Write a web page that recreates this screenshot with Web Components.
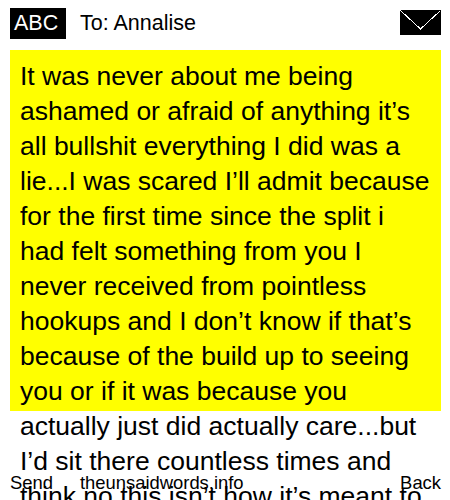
<!DOCTYPE html>
<html>
<head>
<meta charset="utf-8">
<style>
  html, body { margin: 0; height: 100%; overflow: hidden; background: #fff; }
  body { font-family: "Liberation Sans", Arial, sans-serif; color: #000; }
</style>
</head>
<body>
<phone-screen>
  <msg-header slot="header" to="Annalise"></msg-header>
  <msg-body slot="body">It was never about me being ashamed or afraid of anything it’s all bullshit everything I did was a lie...I was scared I’ll admit because for the first time since the split i had felt something from you I never received from pointless hookups and I don’t know if that’s because of the build up to seeing you or if it was because you actually just did actually care...but I’d sit there countless times and think no this isn’t how it’s meant to be</msg-body>
  <msg-footer slot="footer"></msg-footer>
</phone-screen>
<script>
class PhoneScreen extends HTMLElement {
  constructor() {
    super();
    this.attachShadow({ mode: "open" }).innerHTML = `
      <style>
        :host { display: block; position: relative; width: 450px; height: 500px; overflow: hidden; }
        .footer { position: absolute; left: 10px; right: 9px; bottom: 0; }
      </style>
      <slot name="header"></slot>
      <slot name="body"></slot>
      <div class="footer"><slot name="footer"></slot></div>
    `;
  }
}

class MsgHeader extends HTMLElement {
  constructor() {
    super();
    const to = this.getAttribute("to");
    this.attachShadow({ mode: "open" }).innerHTML = `
      <style>
        :host { display: flex; align-items: flex-start; padding: 8px 9px 0 10px; height: 50px; box-sizing: border-box; }
        .mode { width: 56px; height: 31px; box-sizing: border-box; padding-left: 4px; background: #000; color: #fff; font-size: 21.5px; line-height: 30px; }
        .to { margin-left: 14px; font-size: 21.5px; line-height: 30px; flex: 1; }
        svg { display: block; margin-top: 2px; }
      </style>
      <div class="mode">ABC</div>
      <div class="to">To: ${to}</div>
      <svg width="41" height="25" viewBox="0 0 41 25" shape-rendering="crispEdges">
        <rect width="41" height="25" fill="#000"/>
        <path d="M0.5 0.5 L20.5 19 L40.5 0.5" fill="none" stroke="#fff" stroke-width="1"/>
      </svg>
    `;
  }
}

class MsgBody extends HTMLElement {
  constructor() {
    super();
    this.attachShadow({ mode: "open" }).innerHTML = `
      <style>
        :host { display: block; margin: 0 9px 0 10px; height: 361px; background: #ff0; padding: 9px 10px 0; box-sizing: border-box; font-size: 26.5px; line-height: 35px; }
      </style>
      <slot></slot>
    `;
  }
}

class MsgFooter extends HTMLElement {
  constructor() {
    super();
    this.attachShadow({ mode: "open" }).innerHTML = `
      <style>
        :host { display: flex; font-size: 18.4px; line-height: 20px; padding-bottom: 7px; }
        .send { width: 70px; }
        .site { flex: 1; }
      </style>
      <div class="send">Send</div>
      <div class="site">theunsaidwords.info</div>
      <div>Back</div>
    `;
  }
}

customElements.define("phone-screen", PhoneScreen);
customElements.define("msg-header", MsgHeader);
customElements.define("msg-body", MsgBody);
customElements.define("msg-footer", MsgFooter);
</script>
</body>
</html>
